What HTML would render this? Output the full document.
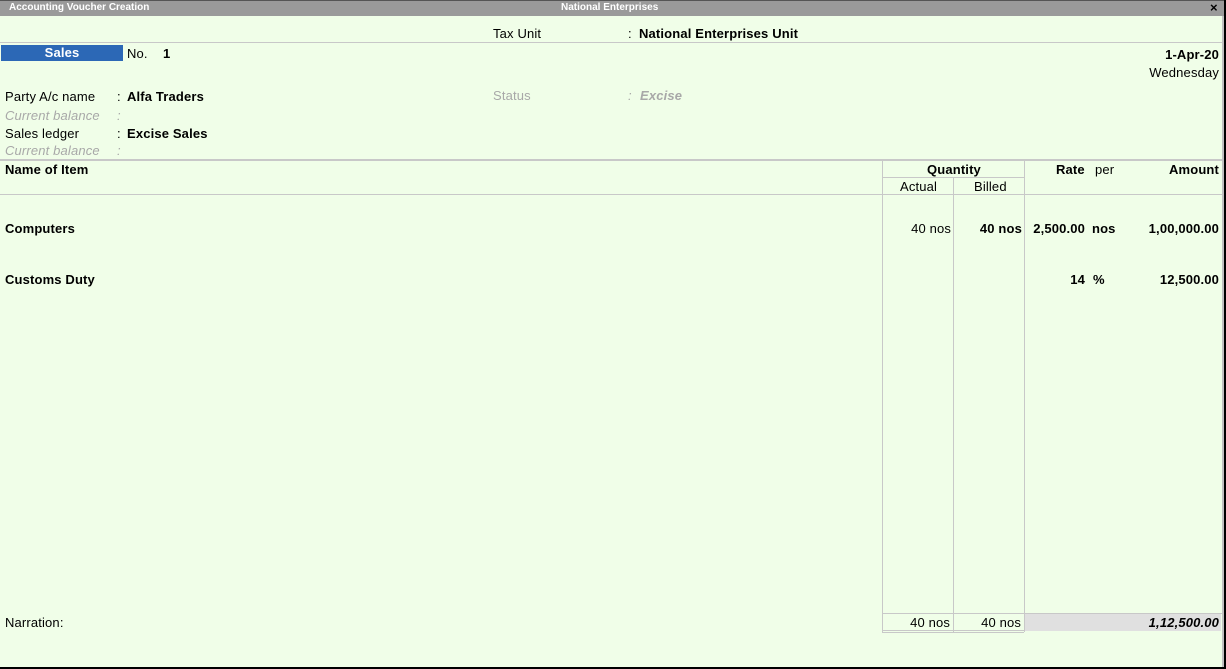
<!DOCTYPE html><html><head><style>
body{margin:0;width:1226px;height:669px;overflow:hidden;background:#f0fee8;font-family:"Liberation Sans",Arial,sans-serif;font-size:13px;letter-spacing:0.15px;color:#000;position:relative}
.a{position:absolute;white-space:nowrap}
.b{font-weight:bold}
.g{color:#a8a8a8;font-style:italic}
.h{position:absolute;height:1px;background:#c8c8c8}
.v{position:absolute;width:1px;background:#c8c8c8}
.r{text-align:right}
</style></head><body>
<div class="a" style="left:0;top:0;width:1226px;height:16px;background:#9a9a9a;border-top:1px solid #555;box-sizing:border-box"></div>
<div class="a b" style="left:9px;top:2px;color:#fff;font-size:10px;letter-spacing:0">Accounting Voucher Creation</div>
<div class="a b" style="left:561px;top:2px;color:#fff;font-size:10px;letter-spacing:0">National Enterprises</div>
<div class="a b" style="left:1210px;top:0px;font-size:13px">×</div>
<div class="a" style="left:1222px;top:16px;width:2px;height:653px;background:#c0c0c0"></div>
<div class="a" style="left:1224px;top:0;width:2px;height:669px;background:#000"></div>
<div class="a" style="left:0;top:667px;width:1226px;height:2px;background:#000"></div>

<div class="a" style="left:493px;top:26px">Tax Unit</div>
<div class="a" style="left:628px;top:26px">:</div>
<div class="a b" style="left:639px;top:26px">National Enterprises Unit</div>
<div class="h" style="left:0;top:42px;width:1222px"></div>

<div class="a b" style="left:1px;top:45px;width:122px;height:16px;background:#2c68b6;color:#fff;text-align:center;line-height:16px">Sales</div>
<div class="a" style="left:127px;top:46px">No.</div>
<div class="a b" style="left:163px;top:46px">1</div>
<div class="a b r" style="right:7px;top:47px">1-Apr-20</div>
<div class="a r" style="right:7px;top:65px">Wednesday</div>

<div class="a" style="left:5px;top:89px">Party A/c name</div>
<div class="a" style="left:117px;top:89px">:</div>
<div class="a b" style="left:127px;top:89px">Alfa Traders</div>
<div class="a" style="left:493px;top:88px;color:#a8a8a8">Status</div>
<div class="a g" style="left:628px;top:88px">:</div>
<div class="a g b" style="left:640px;top:88px">Excise</div>
<div class="a g" style="left:5px;top:108px">Current balance</div>
<div class="a g" style="left:117px;top:108px">:</div>
<div class="a" style="left:5px;top:126px">Sales ledger</div>
<div class="a" style="left:117px;top:126px">:</div>
<div class="a b" style="left:127px;top:126px">Excise Sales</div>
<div class="a g" style="left:5px;top:143px">Current balance</div>
<div class="a g" style="left:117px;top:143px">:</div>

<div class="h" style="left:0;top:159px;width:1222px;height:2px"></div>
<div class="h" style="left:0;top:194px;width:1222px"></div>
<div class="v" style="left:882px;top:161px;height:471px"></div>
<div class="v" style="left:953px;top:177px;height:455px"></div>
<div class="v" style="left:1024px;top:161px;height:471px"></div>
<div class="h" style="left:882px;top:177px;width:142px"></div>

<div class="a b" style="left:5px;top:162px">Name of Item</div>
<div class="a b" style="left:927px;top:162px">Quantity</div>
<div class="a" style="left:900px;top:179px">Actual</div>
<div class="a" style="left:974px;top:179px">Billed</div>
<div class="a b" style="left:1056px;top:162px">Rate</div>
<div class="a" style="left:1095px;top:162px">per</div>
<div class="a b r" style="right:7px;top:162px">Amount</div>

<div class="a b" style="left:5px;top:221px">Computers</div>
<div class="a r" style="right:275px;top:221px">40 nos</div>
<div class="a b r" style="right:204px;top:221px">40 nos</div>
<div class="a b r" style="right:141px;top:221px">2,500.00</div>
<div class="a b" style="left:1092px;top:221px">nos</div>
<div class="a b r" style="right:7px;top:221px">1,00,000.00</div>

<div class="a b" style="left:5px;top:272px">Customs Duty</div>
<div class="a b r" style="right:141px;top:272px">14</div>
<div class="a b" style="left:1093px;top:272px">%</div>
<div class="a b r" style="right:7px;top:272px">12,500.00</div>

<div class="h" style="left:882px;top:613px;width:340px"></div>
<div class="a" style="left:1025px;top:614px;width:196px;height:17px;background:#e0e0e0"></div>
<div class="h" style="left:882px;top:630px;width:142px"></div>
<div class="h" style="left:882px;top:632px;width:142px"></div>
<div class="a" style="left:5px;top:615px">Narration:</div>
<div class="a r" style="right:276px;top:615px">40 nos</div>
<div class="a r" style="right:205px;top:615px">40 nos</div>
<div class="a b r" style="right:7px;top:615px;font-style:italic">1,12,500.00</div>
</body></html>
